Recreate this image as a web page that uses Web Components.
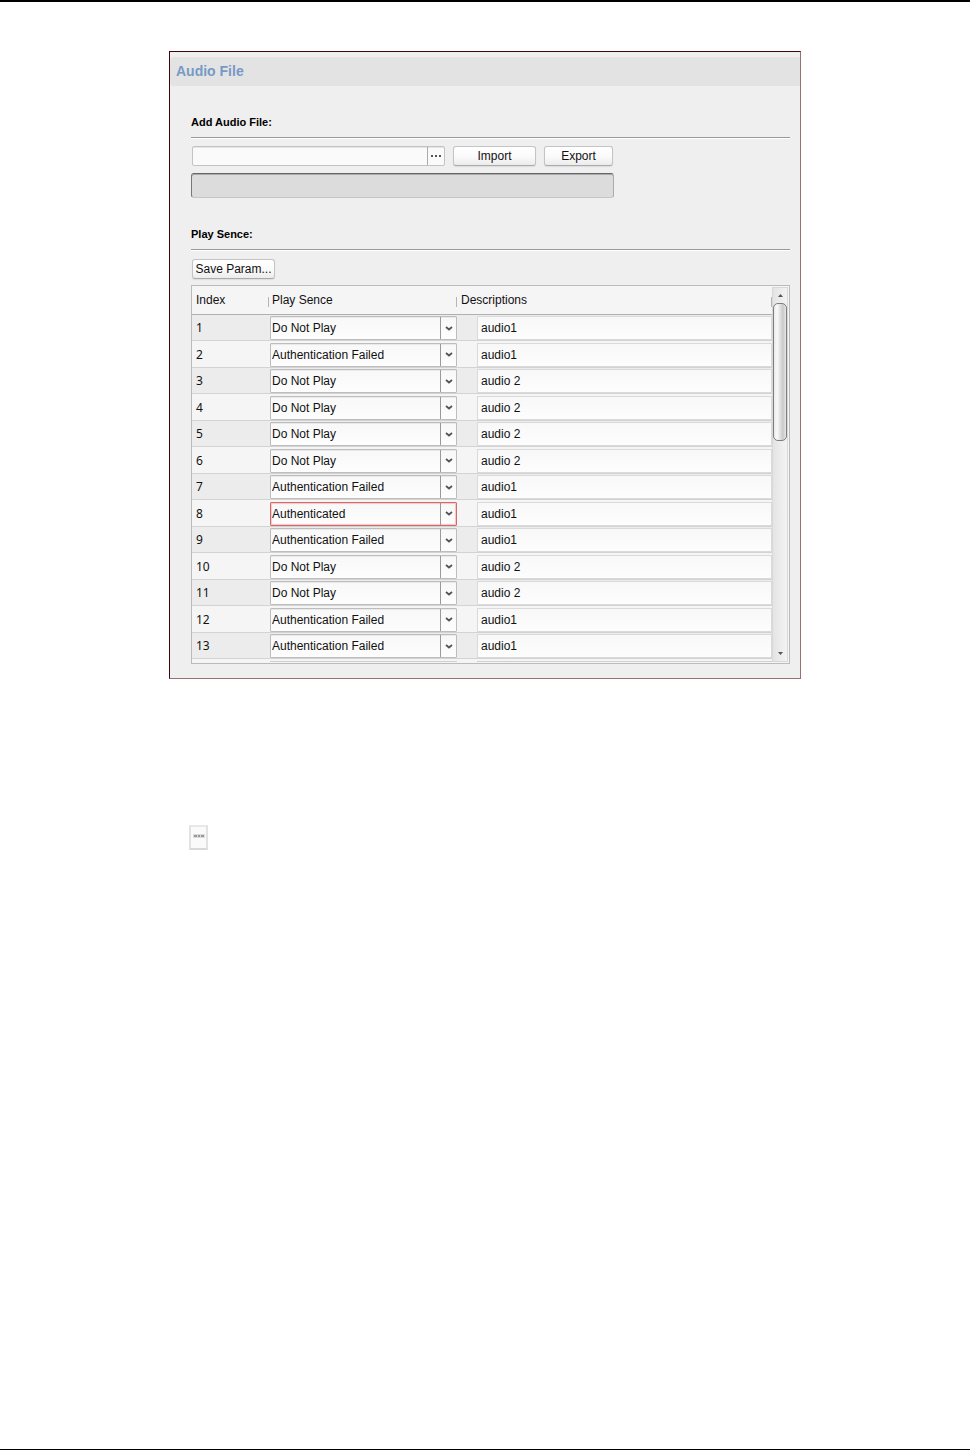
<!DOCTYPE html>
<html lang="en">
<head>
<meta charset="utf-8">
<meta name="viewport" content="width=device-width, initial-scale=1">
<title>Audio File</title>
<style>
  body {
    margin: 0;
    background: #fff;
    color: #111;
    font: 12px/16px "Liberation Sans", Arial, sans-serif;
  }
</style>
</head>
<body>
<manual-page>
  <audio-panel heading="Audio File">
    <panel-section heading="Add Audio File:">
      <file-import></file-import>
    </panel-section>
    <panel-section heading="Play Sence:">
      <push-button class="save">Save Param...</push-button>
      <scene-table></scene-table>
    </panel-section>
  </audio-panel>
  <browse-button slot="note"></browse-button>
</manual-page>

<script>
const BASE = `
  *, *::before, *::after { box-sizing: border-box; }
  :host { display: block; box-sizing: border-box; }
  button, input, select { margin: 0; font: inherit; color: inherit; outline: none; }
`;

class BaseElement extends HTMLElement {
  constructor() {
    super();
    this.attachShadow({ mode: "open" });
  }

  connectedCallback() {
    this.shadowRoot.innerHTML = `<style>${BASE}${this.styles}</style>${this.template}`;
  }
}

class ManualPage extends BaseElement {
  get styles() {
    return `
      :host {
        min-height: 100vh;
        padding-top: 49px;
        border-top: 2px solid #000;
        border-bottom: 1px solid #000;
      }
      .column { max-width: 632px; margin: 0 auto; }
      .note { padding: 146px 0 0 20px; }
    `;
  }

  get template() {
    return `
      <main class="column">
        <slot></slot>
        <div class="note"><slot name="note"></slot></div>
      </main>
    `;
  }
}

class AudioPanel extends BaseElement {
  get styles() {
    return `
      :host {
        padding-top: 5px;
        background: #efefef;
        border: 1px solid;
        border-color: #43040e #9a6f74 #9a6f74 #43040e;
      }
      h1 {
        margin: 0;
        padding: 0 6px;
        font-size: 14px;
        line-height: 29px;
        color: #7799c6;
        background: #e3e3e3;
        border-radius: 4px 0 0 4px;
      }
      .body { padding: 0 10px 14px 21px; }
    `;
  }

  get template() {
    return `
      <h1>${this.getAttribute("heading")}</h1>
      <div class="body"><slot></slot></div>
    `;
  }
}

class PanelSection extends BaseElement {
  get styles() {
    return `
      :host { padding-top: 28px; }
      h2 {
        margin: 0;
        padding-bottom: 7px;
        font-size: 11px;
        line-height: 16px;
        color: #000;
        border-bottom: 1px solid #999;
        box-shadow: 0 1px #fff;
      }
      .content { padding-top: 8px; }
      ::slotted(.save) { width: 83px; margin: 1px 0 6px 1px; }
    `;
  }

  get template() {
    return `
      <h2>${this.getAttribute("heading")}</h2>
      <div class="content"><slot></slot></div>
    `;
  }
}

class PushButton extends BaseElement {
  get styles() {
    return `
      button {
        display: block;
        width: 100%;
        height: 20px;
        padding: 0;
        line-height: 18px;
        white-space: nowrap;
        background: linear-gradient(#fff, #fbfbfb 50%, #ececec);
        border: 1px solid #c4c4c4;
        border-bottom-color: #aaa;
        border-radius: 3px;
        box-shadow: 0 1px 1px #ddd;
      }
    `;
  }

  get template() {
    return `<button type="button"><slot></slot></button>`;
  }
}

// Small framed "..." button
class BrowseButton extends BaseElement {
  get styles() {
    return `
      button {
        display: flex;
        align-items: center;
        justify-content: center;
        width: 19px;
        height: 25px;
        padding: 0 0 3px;
        background: #fafafa;
        border: 2px solid #e2e2e2;
        border-top-color: #e8e8e8;
        border-bottom-color: #d9d9d9;
      }
    `;
  }

  get template() {
    return `
      <button type="button" aria-label="Browse">
        <svg width="12" height="4" viewBox="0 0 12 4">
          <path d="M0 0h12v4H0z" fill="#dcdcdc"/>
          <path d="M1 1h3v2H1zM5 1h2v2H5zM8 1h3v2H8z" fill="#999"/>
        </svg>
      </button>
    `;
  }
}

class FileImport extends BaseElement {
  get styles() {
    return `
      :host { max-width: 423px; }
      .bar { display: flex; gap: 8px; padding: 0 1px; }
      .file {
        display: flex;
        flex: 1;
        height: 20px;
        background: #fafafa;
        border: 1px solid #c3c3c3;
        border-radius: 2px;
        box-shadow: inset 0 1px #e4e4e4;
      }
      .file input {
        flex: 1;
        min-width: 0;
        padding: 0 3px;
        background: none;
        border: 0;
      }
      .file button {
        display: flex;
        align-items: center;
        justify-content: center;
        width: 17px;
        padding: 0 0 1px;
        background: none;
        border: 0;
        border-left: 1px solid #aaa;
      }
      .import { width: 83px; }
      .export { width: 69px; }
      .progress {
        height: 25px;
        margin-top: 7px;
        background: #dcdcdc;
        border: 1px solid;
        border-color: #666 #aaa #c6c6c6 #777;
        border-radius: 3px;
        box-shadow: inset 0 1px #aaa;
      }
    `;
  }

  get template() {
    return `
      <div class="bar">
        <div class="file">
          <input type="text" aria-label="Audio file">
          <button type="button" aria-label="Browse">
            <svg width="10" height="2" viewBox="0 0 10 2" fill="#555">
              <path d="M0 0h2v2H0zM4 0h2v2H4zM8 0h2v2H8z"/>
            </svg>
          </button>
        </div>
        <push-button class="import">Import</push-button>
        <push-button class="export">Export</push-button>
      </div>
      <div class="progress" role="progressbar" aria-label="Import progress"></div>
    `;
  }
}

class SceneSelect extends BaseElement {
  get styles() {
    return `
      :host {
        display: grid;
        grid-template-columns: 1fr 16px;
        height: 24px;
        background: linear-gradient(#f8f8f8, #fdfdfd);
        border: 1px solid #bdbdbd;
        border-radius: 1px;
        box-shadow: inset 0 1px #e9e9e9;
      }
      :host([active]) {
        border-color: #d26a6a;
        box-shadow: inset 0 0 1px 1px #f2c6c6;
      }
      select {
        grid-area: 1 / 1 / 2 / 3;
        width: 100%;
        min-width: 0;
        padding: 0 16px 0 1px;
        appearance: none;
        background: none;
        border: 0;
      }
      .arrow {
        grid-area: 1 / 2;
        display: grid;
        place-items: center;
        border-left: 1px solid #999;
        pointer-events: none;
      }
    `;
  }

  get template() {
    const value = this.getAttribute("value");
    const options = ["Do Not Play", "Authenticated", "Authentication Failed"]
      .map((name) => `<option${name === value ? " selected" : ""}>${name}</option>`)
      .join("");
    return `
      <select aria-label="${this.getAttribute("label")}">${options}</select>
      <span class="arrow">
        <svg width="8" height="5" viewBox="0 0 8 5">
          <path d="M1 1l3 2.5L7 1" fill="none" stroke="#555" stroke-width="1.8"/>
        </svg>
      </span>
    `;
  }
}

class ScrollBar extends BaseElement {
  get styles() {
    return `
      :host {
        display: flex;
        flex-direction: column;
        width: 16px;
        background: linear-gradient(90deg, #e4e4e4, #f3f3f3);
        border: 1px solid #d8d8d8;
      }
      button {
        display: grid;
        place-items: center;
        height: 15px;
        padding: 0;
        background: none;
        border: 0;
      }
      .track { flex: 1; }
      .thumb {
        height: 138px;
        background: linear-gradient(90deg, #e8e8e8, #fafafa 25%, #c9c9c9 75%, #e8e8e8);
        border: 1px solid #7d7d7d;
        border-radius: 5px;
      }
    `;
  }

  get template() {
    return `
      <button type="button" aria-label="Scroll up">
        <svg width="5" height="3" viewBox="0 0 5 3"><path d="M0 3L2.5 0 5 3z" fill="#555"/></svg>
      </button>
      <div class="track"><div class="thumb"></div></div>
      <button type="button" aria-label="Scroll down">
        <svg width="5" height="3" viewBox="0 0 5 3"><path d="M0 0h5L2.5 3z" fill="#555"/></svg>
      </button>
    `;
  }
}

class SceneTable extends BaseElement {
  #rows = [
    ["Do Not Play", "audio1"],
    ["Authentication Failed", "audio1"],
    ["Do Not Play", "audio 2"],
    ["Do Not Play", "audio 2"],
    ["Do Not Play", "audio 2"],
    ["Do Not Play", "audio 2"],
    ["Authentication Failed", "audio1"],
    ["Authenticated", "audio1"],
    ["Authentication Failed", "audio1"],
    ["Do Not Play", "audio 2"],
    ["Do Not Play", "audio 2"],
    ["Authentication Failed", "audio1"],
    ["Authentication Failed", "audio1"],
  ];
  #active = 8;

  get styles() {
    return `
      :host {
        display: flex;
        padding: 0 1px 1px 0;
        background: #f5f5f5;
        border: 1px solid #bbb;
      }
      table {
        flex: 1;
        width: 100%;
        table-layout: fixed;
        border-collapse: separate;
        border-spacing: 0;
      }
      .index { width: 78px; }
      .scene { width: 187px; }
      th {
        height: 29px;
        padding: 0 4px;
        font-weight: normal;
        text-align: left;
        border-bottom: 1px solid #b0b0b0;
      }
      /* short ticks between the header cells */
      th {
        background: linear-gradient(#b5b5b5, #b5b5b5) right 1px top 11px / 1px 10px no-repeat;
      }
      th.play { padding-left: 2px; background-position: right 0 top 11px; }
      th.desc { background-position: right 0 top 11px; }
      td {
        height: 26px;
        padding: 1px 0 0;
        border-bottom: 1px solid #d3d3d3;
      }
      tr:nth-child(even) td { height: 27px; }
      tr:nth-child(odd) td { background: #ececec; }
      td:first-child { padding-left: 4px; font-family: "Noto Sans", sans-serif; }
      td:last-child { padding-left: 20px; }
      td input {
        display: block;
        width: 100%;
        height: 24px;
        padding: 0 3px;
        background: linear-gradient(#f8f8f8, #fdfdfd);
        border: 1px solid #dadada;
      }
      tr.next td { height: 3px; background: none; border: 0; }
      tr.next i { display: block; height: 1px; background: #d0d0d0; }
      scroll-bar { margin-top: 1px; }
    `;
  }

  get template() {
    const rows = this.#rows.map(([scene, text], i) => `
      <tr>
        <td>${i + 1}</td>
        <td><scene-select label="Play sence ${i + 1}" value="${scene}"${i + 1 === this.#active ? " active" : ""}></scene-select></td>
        <td><input type="text" aria-label="Description ${i + 1}" value="${text}"></td>
      </tr>`).join("");
    return `
      <table>
        <colgroup><col class="index"><col class="scene"><col></colgroup>
        <thead>
          <tr><th>Index</th><th class="play">Play Sence</th><th class="desc">Descriptions</th></tr>
        </thead>
        <tbody>
          ${rows}
          <tr class="next"><td></td><td><i></i></td><td><i></i></td></tr>
        </tbody>
      </table>
      <scroll-bar></scroll-bar>
    `;
  }
}

customElements.define("push-button", PushButton);
customElements.define("browse-button", BrowseButton);
customElements.define("scene-select", SceneSelect);
customElements.define("scroll-bar", ScrollBar);
customElements.define("file-import", FileImport);
customElements.define("scene-table", SceneTable);
customElements.define("panel-section", PanelSection);
customElements.define("audio-panel", AudioPanel);
customElements.define("manual-page", ManualPage);
</script>
</body>
</html>
